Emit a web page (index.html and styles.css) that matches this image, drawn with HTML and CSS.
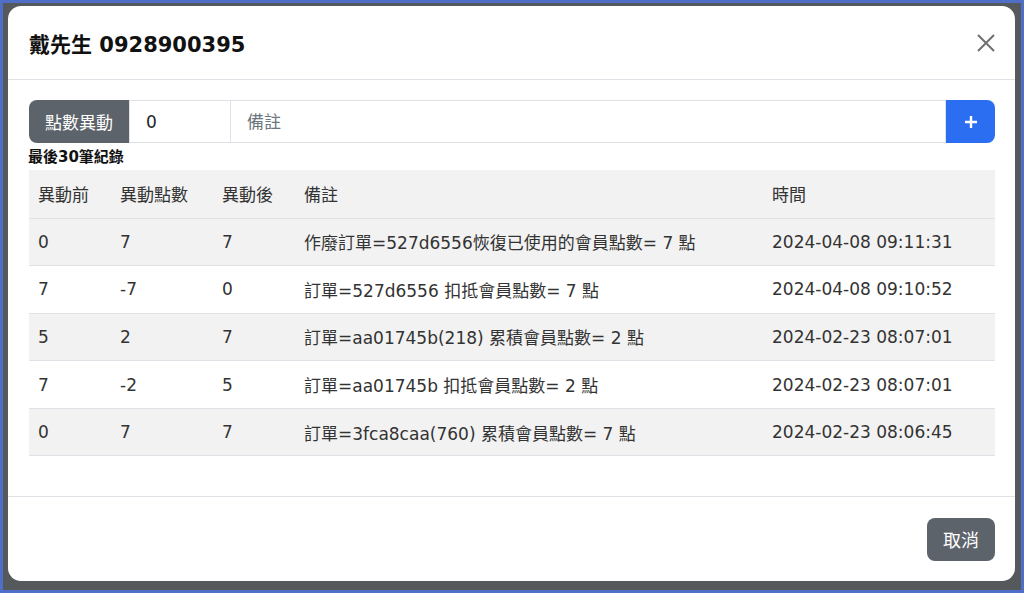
FILE: index.html
```html
<!DOCTYPE html>
<html lang="zh-Hant">
<head>
    <meta charset="UTF-8">
    <meta name="viewport" content="width=device-width, initial-scale=1.0">
    <title>點數異動</title>
    <link rel="stylesheet" href="styles.css">
</head>
<body>
    <div class="backdrop">
        <div class="modal">
            <div class="modal-header">
                <h5 class="modal-title">戴先生 0928900395</h5>
                <button class="btn-close" aria-label="Close">
                    <svg width="20" height="20" viewBox="0 0 20 20">
                        <path d="M2 2 L18 18 M18 2 L2 18" stroke="#6f6f6f" stroke-width="2" fill="none"/>
                    </svg>
                </button>
            </div>

            <div class="modal-body">
                <div class="input-group">
                    <span class="input-label">點數異動</span>
                    <input class="input-points" type="text" value="0">
                    <input class="input-note" type="text" placeholder="備註">
                    <button class="btn-add">
                        <svg width="16" height="16" viewBox="0 0 16 16">
                            <path d="M8 2 V14 M2 8 H14" stroke="#fff" stroke-width="2.4" fill="none"/>
                        </svg>
                    </button>
                </div>

                <div class="caption">最後30筆紀錄</div>

                <table class="log-table">
                    <thead>
                        <tr>
                            <th class="col-before">異動前</th>
                            <th class="col-delta">異動點數</th>
                            <th class="col-after">異動後</th>
                            <th class="col-note">備註</th>
                            <th class="col-time">時間</th>
                        </tr>
                    </thead>
                    <tbody>
                        <tr>
                            <td>0</td><td>7</td><td>7</td>
                            <td>作廢訂單=527d6556恢復已使用的會員點數= 7 點</td>
                            <td>2024-04-08 09:11:31</td>
                        </tr>
                        <tr>
                            <td>7</td><td>-7</td><td>0</td>
                            <td>訂單=527d6556 扣抵會員點數= 7 點</td>
                            <td>2024-04-08 09:10:52</td>
                        </tr>
                        <tr>
                            <td>5</td><td>2</td><td>7</td>
                            <td>訂單=aa01745b(218) 累積會員點數= 2 點</td>
                            <td>2024-02-23 08:07:01</td>
                        </tr>
                        <tr>
                            <td>7</td><td>-2</td><td>5</td>
                            <td>訂單=aa01745b 扣抵會員點數= 2 點</td>
                            <td>2024-02-23 08:07:01</td>
                        </tr>
                        <tr>
                            <td>0</td><td>7</td><td>7</td>
                            <td>訂單=3fca8caa(760) 累積會員點數= 7 點</td>
                            <td>2024-02-23 08:06:45</td>
                        </tr>
                    </tbody>
                </table>
            </div>

            <div class="modal-footer">
                <button class="btn-cancel">取消</button>
            </div>
        </div>
    </div>
</body>
</html>
```

FILE: styles.css
```css
* {
    box-sizing: border-box;
}

body {
    margin: 0;
    font-family: "DejaVu Sans", "Noto Sans CJK TC", sans-serif;
    color: #212529;
}

.backdrop {
    width: 1024px;
    height: 593px;
    border: 3px solid #4f6ec8;
    background-color: #56595c;
    padding: 3px 6px 9px 5px;
}

.modal {
    height: 100%;
    background-color: #fff;
    border-radius: 13px;
    display: flex;
    flex-direction: column;
}

.modal-header {
    height: 74px;
    display: flex;
    align-items: center;
    justify-content: space-between;
    padding: 0 20px 0 21px;
    border-bottom: 1px solid #dee2e6;
}

.modal-title {
    margin: 0;
    font-size: 21px;
    font-weight: 700;
    color: #111;
}

.btn-close {
    background: none;
    border: 0;
    padding: 0;
    width: 20px;
    height: 20px;
    margin-right: -1px;
    cursor: pointer;
}

.modal-body {
    flex: 1;
    padding: 20px 20px 0 21px;
}

.input-group {
    display: flex;
    height: 43px;
}

.input-label {
    width: 100px;
    background-color: #5c636a;
    color: #fff;
    font-size: 17px;
    display: flex;
    align-items: center;
    justify-content: center;
    border-radius: 8px 0 0 8px;
}

.input-group input {
    font-family: inherit;
    font-size: 17px;
    color: #212529;
    border: 1px solid #dee2e6;
    padding: 0 16px;
    outline: none;
}

.input-group input::placeholder {
    color: #6c757d;
}

.input-points {
    width: 101px;
    border-right: 0 !important;
}

.input-note {
    flex: 1;
    min-width: 0;
}

.btn-add {
    width: 49px;
    background-color: #2c6ef2;
    border: 0;
    border-radius: 0 8px 8px 0;
    display: flex;
    align-items: center;
    justify-content: center;
    cursor: pointer;
}

.caption {
    font-size: 15px;
    font-weight: 700;
    margin: 5px 0 4px -1px;
    line-height: 18px;
    color: #111;
}

.log-table {
    width: 100%;
    border-collapse: collapse;
    font-size: 17px;
    color: #333;
}

.log-table th,
.log-table td {
    height: 47.6px;
    padding: 0 9px;
    text-align: left;
    font-weight: 400;
    border-bottom: 1px solid #dee2e6;
    white-space: nowrap;
}

.log-table th {
    height: 48px;
}

.log-table thead tr,
.log-table tbody tr:nth-child(odd) {
    background-color: #f2f2f2;
}

.col-before { width: 82px; }
.col-delta { width: 102px; }
.col-after { width: 82px; }
.col-note { width: 468px; }

.modal-footer {
    height: 85px;
    border-top: 1px solid #dee2e6;
    display: flex;
    align-items: center;
    justify-content: flex-end;
    padding: 0 20px;
}

.btn-cancel {
    font-family: inherit;
    font-size: 18px;
    color: #fff;
    background-color: #5c636a;
    border: 0;
    border-radius: 8px;
    width: 68px;
    height: 43px;
    cursor: pointer;
}
```
